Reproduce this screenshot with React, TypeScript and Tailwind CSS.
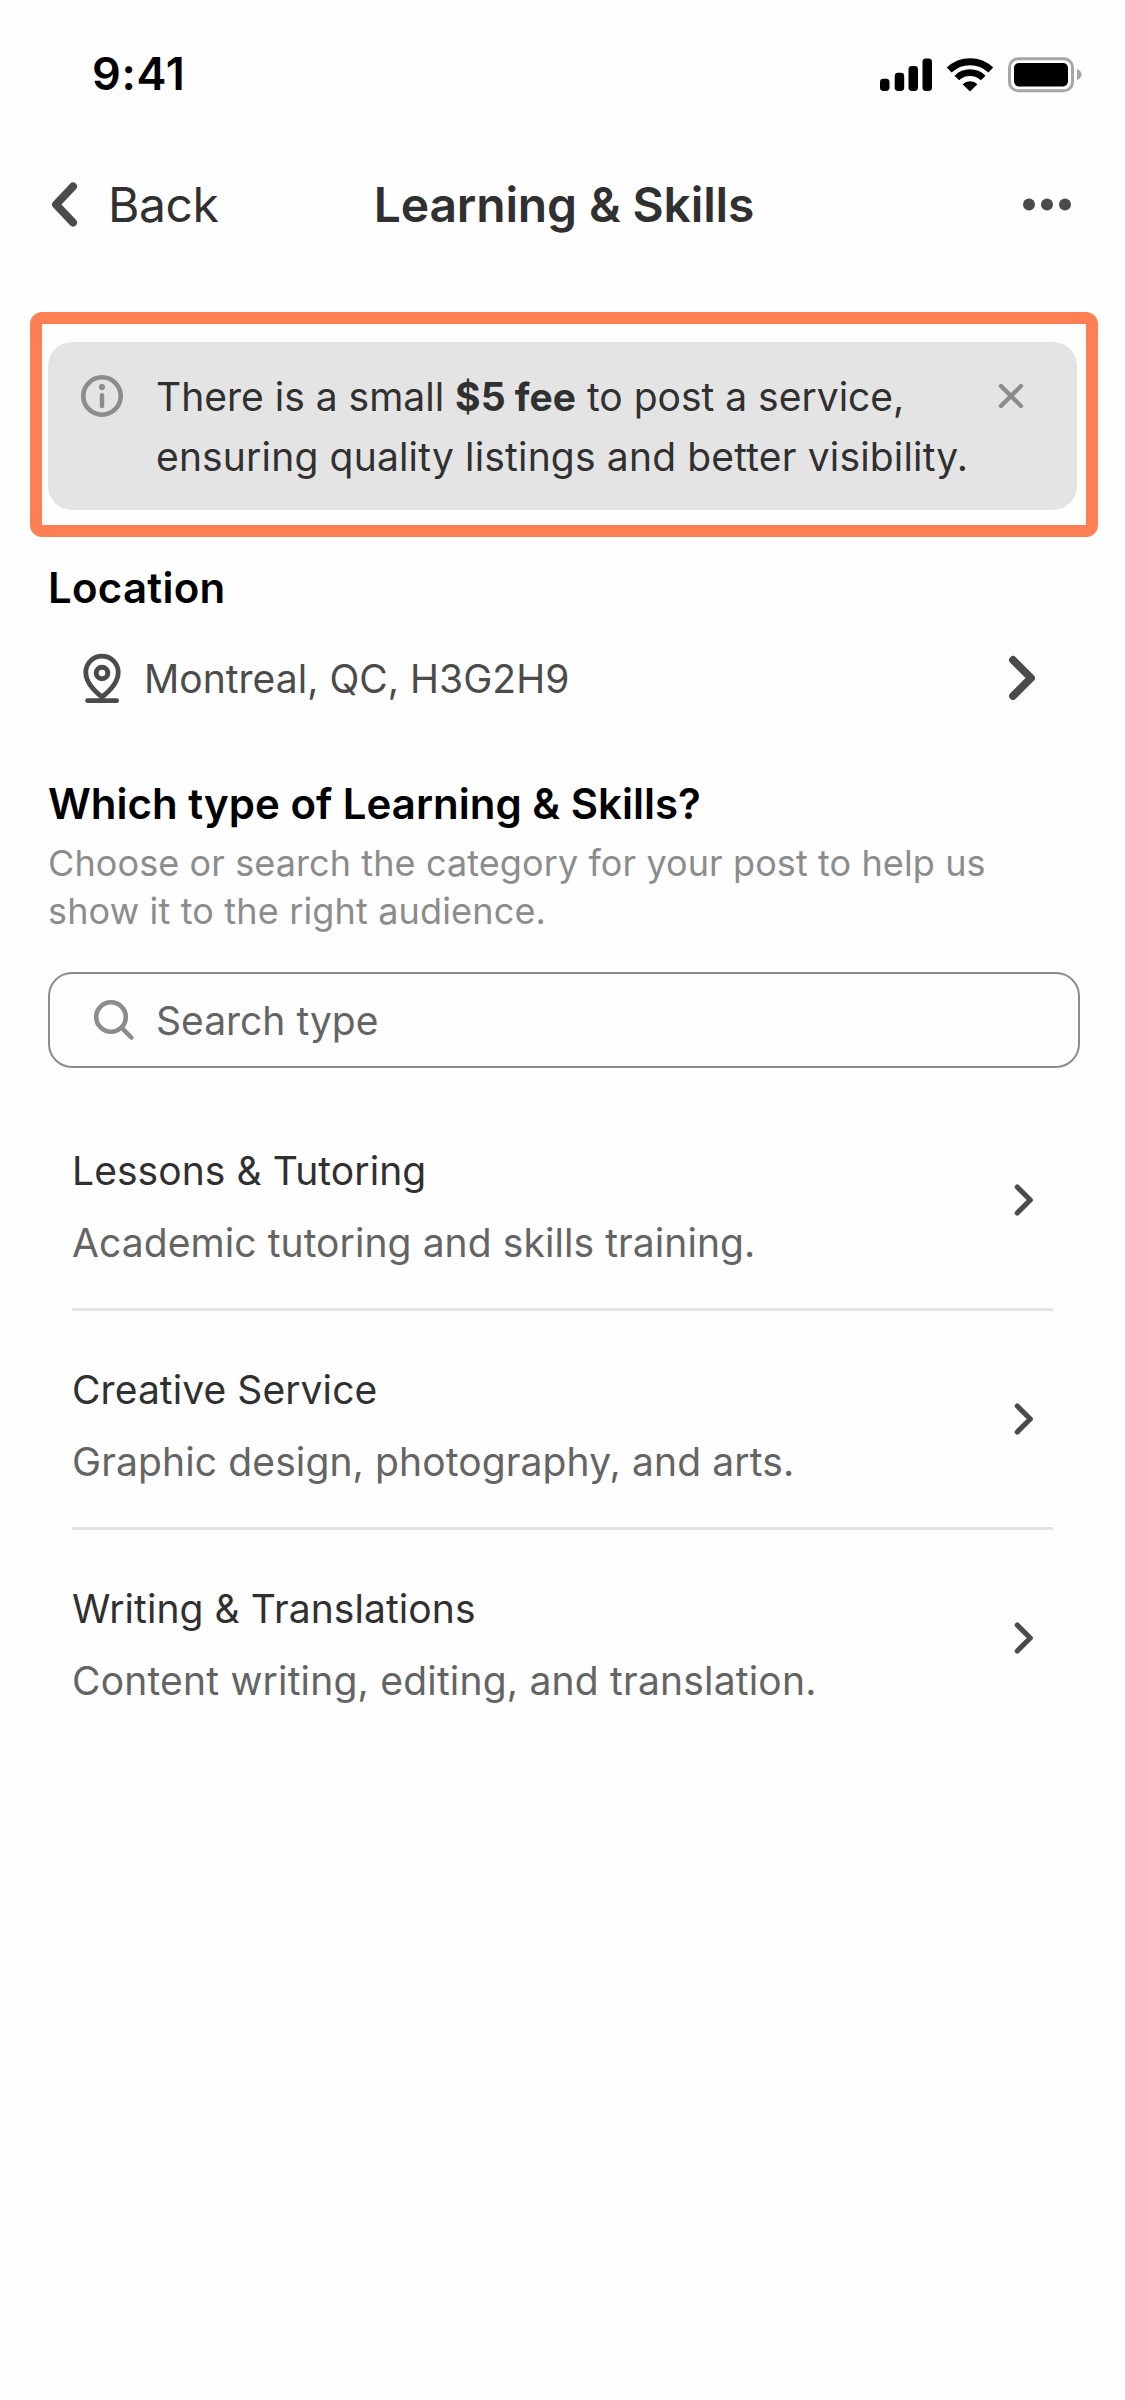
const categories = [
  { title: 'Lessons & Tutoring', detail: 'Academic tutoring and skills training.', detailTracking: 'tracking-[0.08px]' },
  { title: 'Creative Service', detail: 'Graphic design, photography, and arts.', detailTracking: 'tracking-[0.12px]' },
  { title: 'Writing & Translations', detail: 'Content writing, editing, and translation.', detailTracking: 'tracking-[0.2px]' },
];

function StatusIcons() {
  return (
    <svg width="204" height="36" viewBox="879 57 204 36" className="overflow-visible">
      <rect x="880" y="78.7" width="9.5" height="12.3" rx="3.4" />
      <rect x="894.7" y="72.7" width="9.5" height="18.3" rx="3.4" />
      <rect x="908.5" y="66" width="9.5" height="25" rx="3.4" />
      <rect x="922.5" y="58.5" width="9.5" height="32.5" rx="3.4" />
      <g fill="none" stroke="black">
        <path d="M949.2 70.1A30 30 0 0 1 990.8 70.1" strokeWidth="7" />
        <path d="M956.8 78A19 19 0 0 1 983.2 78" strokeWidth="6.6" />
      </g>
      <path d="M970 91.4L962.6 84.2A10.6 10.6 0 0 1 977.4 84.2Z" />
      <rect x="1009.5" y="58.8" width="63" height="32" rx="8.5" fill="none" stroke="#a6a6a6" strokeWidth="3" />
      <rect x="1014" y="63" width="54" height="23.4" rx="4.8" />
      <path d="M1077 69V80C1083.2 77.4 1083.2 71.6 1077 69Z" fill="#a6a6a6" />
    </svg>
  );
}

function BackIcon() {
  return (
    <svg width="48" height="48" viewBox="0 0 48 48" fill="none" stroke="#4b4b4b" strokeWidth="8" strokeLinecap="round" strokeLinejoin="round">
      <path d="M31 5.5L14 23.5L31 41.5" />
    </svg>
  );
}

function MoreIcon() {
  return (
    <svg width="48" height="48" viewBox="0 0 48 48" fill="#4b4b4b">
      <circle cx="6" cy="23.5" r="6" />
      <circle cx="24" cy="23.5" r="6" />
      <circle cx="42" cy="23.5" r="6" />
    </svg>
  );
}

function InfoIcon() {
  return (
    <svg width="48" height="48" viewBox="0 0 48 48" fill="none" stroke="#8c8c8c" strokeWidth="4.6" strokeLinecap="round">
      <circle cx="24" cy="24" r="18.7" />
      <path d="M24 23.3V34" strokeWidth="4.4" />
      <circle cx="24" cy="15" r="3.1" fill="#8c8c8c" stroke="none" />
    </svg>
  );
}

function CloseIcon() {
  return (
    <svg width="48" height="48" viewBox="0 0 48 48" fill="none" stroke="#8c8c8c" strokeWidth="4.4" strokeLinecap="round">
      <path d="M14 14L34 34M34 14L14 34" />
    </svg>
  );
}

function PinIcon() {
  return (
    <svg width="48" height="48" viewBox="0 0 48 48" fill="none" stroke="#4b4b4b" strokeWidth="4.8" strokeLinecap="round" strokeLinejoin="round" className="overflow-visible">
      <path d="M24 42C15 35 7.8 27 7.8 17.3A16.2 16.2 0 0 1 40.2 17.3C40.2 27 33 35 24 42Z" />
      <circle cx="24" cy="18" r="5.8" strokeWidth="5" />
      <path d="M9.6 45.7H38.6" />
    </svg>
  );
}

function SearchIcon() {
  return (
    <svg width="48" height="48" viewBox="0 0 48 48" fill="none" stroke="#8c8c8c" strokeWidth="4.6" strokeLinecap="round">
      <circle cx="21" cy="21" r="14.8" />
      <path d="M31.8 31.8L41.3 41.5" />
    </svg>
  );
}

function LargeChevron() {
  return (
    <svg width="48" height="48" viewBox="0 0 48 48" fill="none" stroke="#4b4b4b" strokeWidth="7.8" strokeLinecap="round" strokeLinejoin="round">
      <path d="M14 5L32 23L14 41" />
    </svg>
  );
}

function SmallChevron() {
  return (
    <svg width="36" height="36" viewBox="0 0 36 36" fill="none" stroke="#4b4b4b" strokeWidth="5.2" strokeLinecap="round" strokeLinejoin="round">
      <path d="M12.3 5L25.3 18L12.3 31" />
    </svg>
  );
}

export default function App() {
  return (
    <div className="flex h-[2400px] w-[1125px] flex-col bg-[#fefefe] font-['Inter',sans-serif] text-[#303030]">
      <div className="flex h-[147px] items-center justify-between pr-[42px] pl-[92px]">
        <span className="text-[45px] font-semibold tracking-[0.7px] text-black">9:41</span>
        <div className="pt-[3px]">
          <StatusIcons />
        </div>
      </div>

      <header className="grid h-[115px] grid-cols-[1fr_auto_1fr] items-center pr-[39px] pl-[42px]">
        <button className="flex items-center gap-[18px] text-left text-[48px] tracking-[-0.4px]">
          <BackIcon />
          Back
        </button>
        <h1 className="text-[48px] font-semibold tracking-[-0.15px]">Learning &amp; Skills</h1>
        <button className="mr-[15px] justify-self-end">
          <MoreIcon />
        </button>
      </header>

      <section className="mt-[50px] mr-[27px] ml-[30px] h-[225px] rounded-[12px] border-[12px] border-[#ff7f55] pt-[18px] pr-[9px] pb-[15px] pl-[6px]">
        <div className="flex h-full items-start rounded-[24px] bg-[#e4e4e4] pt-[25px] pr-[42px] pl-[30px]">
          <div className="mt-[5px]">
            <InfoIcon />
          </div>
          <p className="ml-[30px] flex-1 text-[39px] leading-[60px] whitespace-nowrap">
            There is a small <strong className="font-bold">$5 fee</strong> to post a service,
            <br />
            <span className="tracking-[0.17px]">ensuring quality listings and better visibility.</span>
          </p>
          <button className="mt-[5px]">
            <CloseIcon />
          </button>
        </div>
      </section>

      <main className="flex flex-col pr-[45px] pl-[48px]">
        <h2 className="mt-[21px] text-[42px] leading-[60px] font-semibold tracking-[0.25px] text-black">Location</h2>
        <div className="mt-[31px] flex h-[60px] items-center pr-[33px] pl-[30px] text-[#4b4b4b]">
          <PinIcon />
          <span className="ml-[18px] flex-1 text-[39px] leading-[60px] tracking-[0.03px]">Montreal, QC, H3G2H9</span>
          <LargeChevron />
        </div>

        <h2 className="mt-[65px] text-[42px] leading-[60px] font-semibold text-black">Which type of Learning &amp; Skills?</h2>
        <p className="mt-[5px] text-[36px] leading-[48px] tracking-[0.1px] text-[#8c8c8c]">
          Choose or search the category for your post to help us
          <br />
          <span className="tracking-[0.16px]">show it to the right audience.</span>
        </p>

        <div className="mt-[37px] flex h-[96px] items-center rounded-[24px] border-2 border-[#8c8c8c] pl-[40px]">
          <SearchIcon />
          <span className="ml-[18px] pt-[2px] text-[39px] text-[#646464]">Search type</span>
        </div>

        <ul className="mt-[24px] mr-[27px] ml-[24px]">
          {categories.map((category) => (
            <li key={category.title} className="flex h-[219px] items-center justify-between border-b-[3px] border-[#e4e4e4] pr-[12px] last:border-transparent">
              <div className="flex flex-col gap-[24px] pt-[14px] text-[39px] leading-[48px] tracking-[0.08px]">
                <span>{category.title}</span>
                <span className={`text-[#646464] ${category.detailTracking}`}>{category.detail}</span>
              </div>
              <SmallChevron />
            </li>
          ))}
        </ul>
      </main>
    </div>
  );
}
